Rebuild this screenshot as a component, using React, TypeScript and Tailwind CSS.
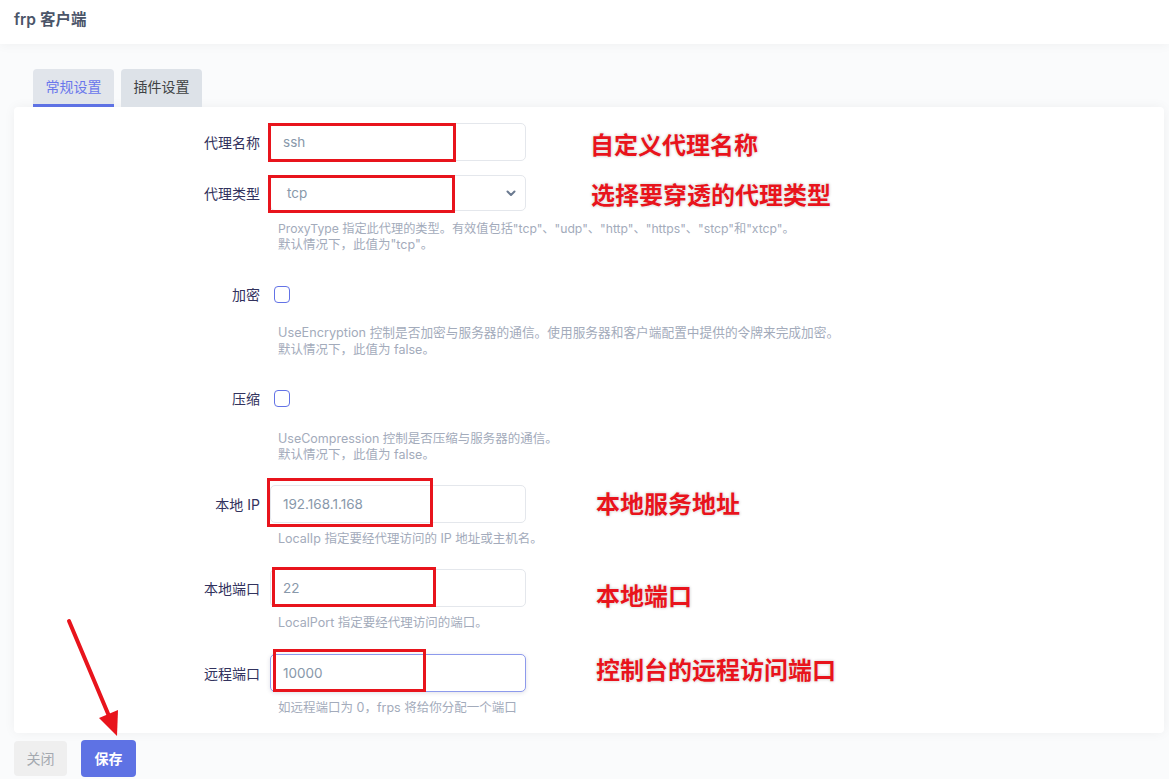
import React from "react";

const FONT = "font-['Inter','Noto_Sans_CJK_SC',sans-serif]";

function Label({ children }: { children: React.ReactNode }) {
  return (
    <div className="w-[246px] shrink-0 text-right text-[14px] text-[#32325d]">{children}</div>
  );
}

function Help({ children, className = "" }: { children: React.ReactNode; className?: string }) {
  return (
    <div className={`pl-[264px] text-[12.5px] leading-[16px] text-[#a3abbb] ${className}`}>{children}</div>
  );
}

function TextInput({ value, focused = false }: { value: string; focused?: boolean }) {
  return (
    <div
      className={`ml-[10px] flex h-[38px] w-[256px] items-center rounded-[5px] border bg-white pl-[12px] text-[13.5px] text-[#8898aa] ${
        focused
          ? "border-[#8d9aec] shadow-[0_1px_4px_rgba(50,50,93,0.15)]"
          : "border-[#e4e7ec]"
      }`}
    >
      {value}
    </div>
  );
}

function Checkbox() {
  return (
    <div className="ml-[14px] h-[17px] w-[16px] rounded-[4px] border-[1.5px] border-[#6373e6] bg-white" />
  );
}

function Annot({ children, className }: { children: React.ReactNode; className: string }) {
  return (
    <div
      className={`absolute whitespace-nowrap font-['Noto_Sans_CJK_SC',sans-serif] text-[24px] leading-[24px] font-bold text-[#e8141c] [text-shadow:0_0_2px_#fff,0_0_3px_rgba(0,0,0,0.3)] ${className}`}
    >
      {children}
    </div>
  );
}

function RedBox({ className }: { className: string }) {
  return <div className={`absolute border-[3px] border-[#e8141c] ${className}`} />;
}

export default function App() {
  return (
    <div className={`relative h-[779px] w-[1169px] overflow-hidden bg-[#fafbfc] ${FONT}`}>
      {/* header */}
      <div className="flex h-[44px] items-start bg-white pl-[14px] pt-[8px] shadow-[0_2px_10px_rgba(0,0,0,0.04)]">
        <span className="text-[15.5px] font-semibold text-[#4b5569]">frp 客户端</span>
      </div>

      {/* tabs */}
      <div className="ml-[33px] mt-[25px] flex gap-[7px]">
        <div className="flex h-[38px] w-[81px] items-center justify-center rounded-t-[4px] border-b-[3px] border-[#5e72e4] bg-[#e1e5eb] text-[14px] text-[#6a77ec]">
          常规设置
        </div>
        <div className="flex h-[38px] w-[81px] items-center justify-center rounded-t-[4px] bg-[#dde2e8] pb-[3px] text-[14px] text-[#404244]">
          插件设置
        </div>
      </div>

      {/* card */}
      <div className="ml-[14px] w-[1150px] rounded-[4px] bg-white pb-[17px] pt-[16px] shadow-[0_0_12px_rgba(0,0,0,0.05)]">
        <div className="flex h-[38px] items-center">
          <Label>代理名称</Label>
          <TextInput value="ssh" />
        </div>

        <div className="mt-[14px] flex h-[36px] items-center">
          <Label>代理类型</Label>
          <div className="ml-[10px] flex h-[36px] w-[256px] items-center justify-between rounded-[5px] border border-[#e4e7ec] bg-white pl-[16px] pr-[9px] text-[13.5px] text-[#8898aa]">
            <span>tcp</span>
            <svg width="10" height="7" viewBox="0 0 10 7">
              <path d="M1.5 1.5 L5 5 L8.5 1.5" fill="none" stroke="#6b7a90" strokeWidth="2" strokeLinecap="round" strokeLinejoin="round" />
            </svg>
          </div>
        </div>
        <Help className="mt-[10px]">
          <div className="text-[12.2px]">ProxyType 指定此代理的类型。有效值包括"tcp"、"udp"、"http"、"https"、"stcp"和"xtcp"。</div>
          <div>默认情况下，此值为"tcp"。</div>
        </Help>

        <div className="mt-[22px] flex h-[38px] items-center">
          <Label>加密</Label>
          <Checkbox />
        </div>
        <Help className="mt-[11px] leading-[17px]">
          <div className="text-[12.7px]">UseEncryption 控制是否加密与服务器的通信。使用服务器和客户端配置中提供的令牌来完成加密。</div>
          <div>默认情况下，此值为 false。</div>
        </Help>

        <div className="mt-[21px] flex h-[38px] items-center">
          <Label>压缩</Label>
          <Checkbox />
        </div>
        <Help className="mt-[14px]">
          <div>UseCompression 控制是否压缩与服务器的通信。</div>
          <div>默认情况下，此值为 false。</div>
        </Help>

        <div className="mt-[22px] flex h-[38px] items-center">
          <Label>本地 IP</Label>
          <TextInput value="192.168.1.168" />
        </div>
        <Help className="mt-[8px]">LocalIp 指定要经代理访问的 IP 地址或主机名。</Help>

        <div className="mt-[22px] flex h-[38px] items-center">
          <Label>本地端口</Label>
          <TextInput value="22" />
        </div>
        <Help className="mt-[8px]">LocalPort 指定要经代理访问的端口。</Help>

        <div className="mt-[23px] flex h-[38px] items-center">
          <Label>远程端口</Label>
          <TextInput value="10000" focused />
        </div>
        <Help className="mt-[8px]">如远程端口为 0，frps 将给你分配一个端口</Help>
      </div>

      {/* buttons */}
      <div className="ml-[14px] mt-[7px] flex items-center gap-[14px]">
        <button className="h-[35px] w-[53px] rounded-[4px] bg-[#efefef] text-[14px] text-[#a4a9b0]">关闭</button>
        <button className="h-[37px] w-[55px] rounded-[4px] bg-[#5e72e4] text-[14px] font-bold text-white">保存</button>
      </div>

      {/* annotations */}
      <RedBox className="left-[268px] top-[123px] h-[39px] w-[188px]" />
      <RedBox className="left-[268px] top-[175px] h-[38px] w-[187px]" />
      <RedBox className="left-[267px] top-[478px] h-[49px] w-[166px]" />
      <RedBox className="left-[272px] top-[567px] h-[40px] w-[164px]" />
      <RedBox className="left-[273px] top-[649px] h-[43px] w-[153px]" />

      <Annot className="left-[590px] top-[132px]">自定义代理名称</Annot>
      <Annot className="left-[591px] top-[182px]">选择要穿透的代理类型</Annot>
      <Annot className="left-[596px] top-[491px]">本地服务地址</Annot>
      <Annot className="left-[596px] top-[583px]">本地端口</Annot>
      <Annot className="left-[596px] top-[657px]">控制台的远程访问端口</Annot>

      <svg className="absolute left-0 top-[600px]" width="140" height="150" viewBox="0 0 140 150">
        <line x1="69" y1="21" x2="109" y2="116" stroke="#e8141c" strokeWidth="4" strokeLinecap="round" />
        <polygon points="117,136 118,110 99,118" fill="#e8141c" />
      </svg>
    </div>
  );
}
